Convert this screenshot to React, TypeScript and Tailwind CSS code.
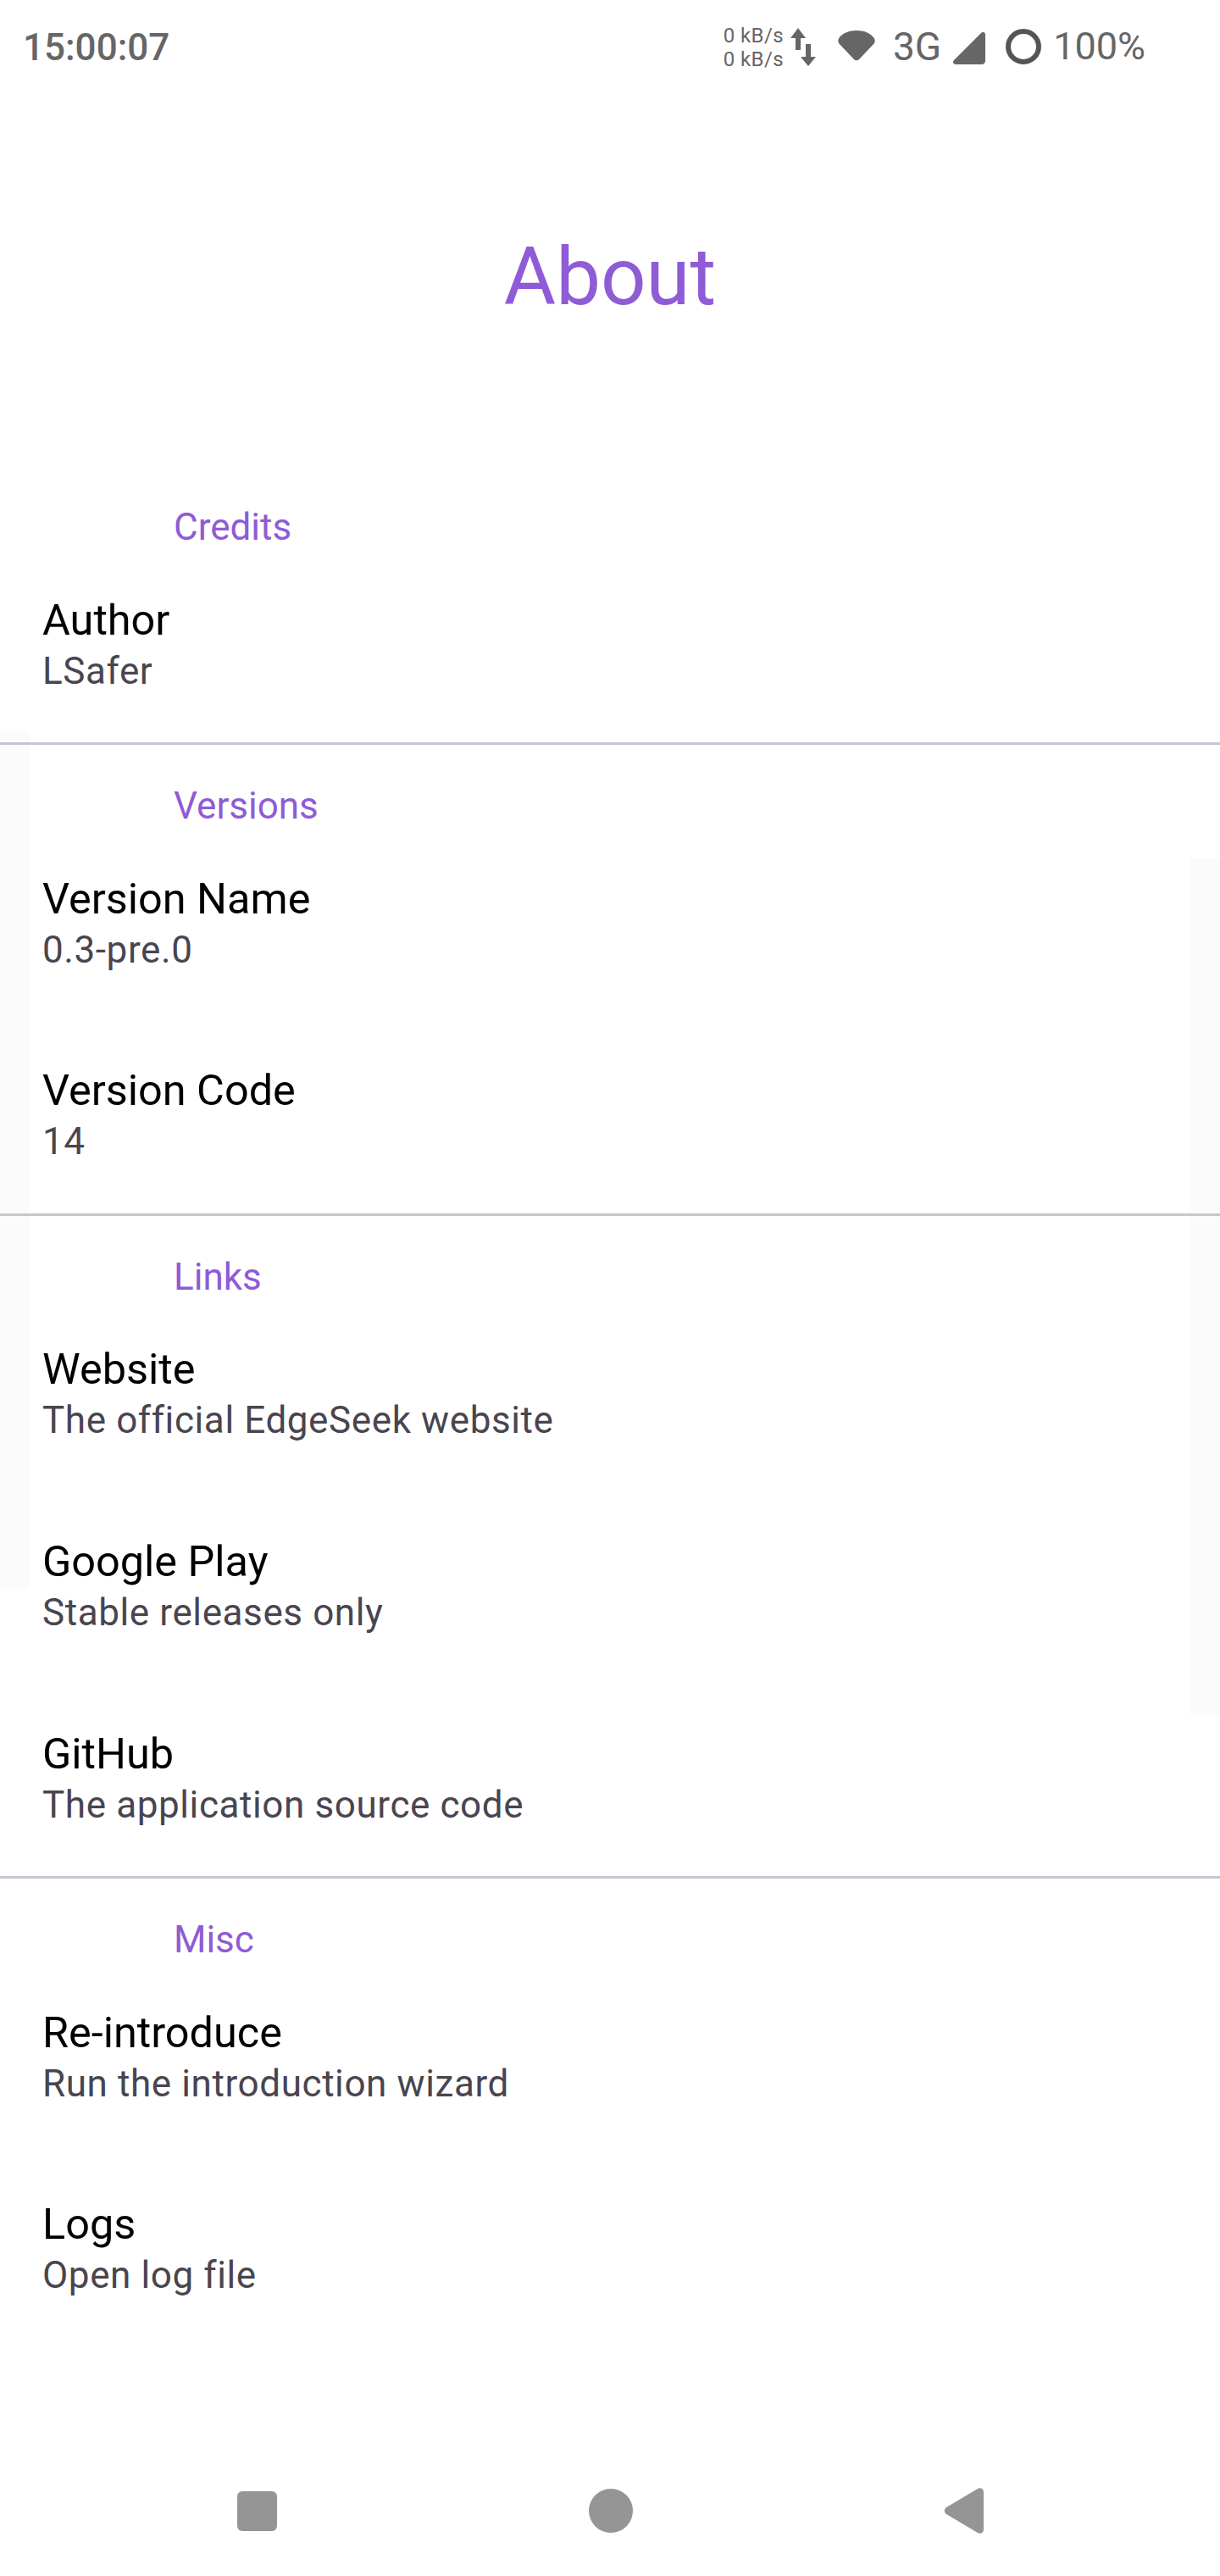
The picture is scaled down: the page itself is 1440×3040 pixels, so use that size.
import React from 'react';

const FONT = "font-['Roboto',sans-serif]";

const sections = [
  { title: 'Credits', rows: [{ name: 'Author', sub: 'LSafer' }] },
  {
    title: 'Versions',
    rows: [
      { name: 'Version Name', sub: '0.3-pre.0' },
      { name: 'Version Code', sub: '14' },
    ],
  },
  {
    title: 'Links',
    rows: [
      { name: 'Website', sub: 'The official EdgeSeek website' },
      { name: 'Google Play', sub: 'Stable releases only' },
      { name: 'GitHub', sub: 'The application source code' },
    ],
  },
  {
    title: 'Misc',
    rows: [
      { name: 'Re-introduce', sub: 'Run the introduction wizard' },
      { name: 'Logs', sub: 'Open log file' },
    ],
  },
];

const StatusBar = () => (
  <div className="flex h-[112px] items-start justify-between pl-[27px] pr-[88px] text-[#666666]">
    <span className="mt-[30px] text-[44px] leading-[52px] font-medium">15:00:07</span>
    <div className="flex items-start">
      <div className="mt-[28px] flex flex-col text-[24px] leading-[28px] tracking-[0.4px]">
        <span>0 kB/s</span>
        <span>0 kB/s</span>
      </div>
      <svg className="ml-[7px] mt-[33px]" width="32" height="46" viewBox="0 0 32 46" fill="#666666">
        <path d="M10 0 L19 12 L13 12 L13 26 L7 26 L7 12 L1 12 Z" />
        <path d="M19 19 L25 19 L25 34 L31 34 L22 45 L13 34 L19 34 Z" />
      </svg>
      <svg className="ml-[25px] mt-[36px]" width="44" height="36" viewBox="0 0 44 36" fill="#666666">
        <path d="M22 0 C31 0 38 3 42 8 C44 10 44 13 43 15 L26 33 C24 36 20 36 18 33 L1 15 C0 13 0 10 2 8 C6 3 13 0 22 0 Z" />
      </svg>
      <span className="ml-[21px] mt-[28px] text-[46px] leading-[54px]">3G</span>
      <svg className="ml-[14px] mt-[38px]" width="38" height="38" viewBox="0 0 38 38" fill="#666666">
        <path d="M33 1 C35 -1 38 0 38 3 L38 34 C38 36 36 38 34 38 L3 38 C0 38 -1 35 1 33 Z" />
      </svg>
      <svg className="ml-[24px] mt-[34px]" width="42" height="42" viewBox="0 0 42 42" fill="none">
        <circle cx="21" cy="21" r="18" stroke="#555555" strokeWidth="6" />
      </svg>
      <span className="ml-[14px] mt-[28px] text-[45px] leading-[54px]">100%</span>
    </div>
  </div>
);

const NavBar = () => (
  <div className="flex items-center pl-[280px] pr-[279px] pt-[2px] justify-between">
    <div className="h-[47px] w-[47px] rounded-[6px] bg-[#959595]" />
    <div className="h-[52px] w-[52px] rounded-full bg-[#959595]" />
    <svg width="47" height="54" viewBox="0 0 47 54" fill="#959595">
      <path d="M40 1 C43 -1 47 1 47 5 L47 49 C47 53 43 55 40 53 L3 31 C0 29 0 25 3 23 Z" />
    </svg>
  </div>
);

const App = () => {
  return (
    <div className={`${FONT} relative h-[3040px] w-[1440px] overflow-hidden bg-white`}>
      <div className="absolute left-0 top-[863px] h-[1012px] w-[35px] bg-[#fbfbfb]" />
      <div className="absolute right-0 top-[1013px] h-[1012px] w-[35px] bg-[#fbfbfb]" />
      <div className="relative">
        <StatusBar />
        <h1 className="mt-[159px] text-center text-[94px] leading-[112px] font-normal text-[#8f5bd6]">About</h1>
        <div className="mt-[167px]">
          {sections.map((section, i) => (
            <div key={section.title} className={i < sections.length - 1 ? 'border-b-[3px] border-[#cac4d0] pb-[3.33px]' : ''}>
              <div className="pl-[205px] pt-[50px] pb-[2px] text-[44px] leading-[44px] text-[#8f5bd6]">{section.title}</div>
              {section.rows.map((row) => (
                <div key={row.name} className="px-[50px] py-[52.83px]">
                  <div className="text-[50.4px] leading-[66px] text-black">{row.name}</div>
                  <div className="text-[44px] leading-[55px] tracking-[0.6px] text-[#49454f]">{row.sub}</div>
                </div>
              ))}
            </div>
          ))}
        </div>
      </div>
      <div className="absolute bottom-[50px] left-0 right-0">
        <NavBar />
      </div>
    </div>
  );
};

export default App;
